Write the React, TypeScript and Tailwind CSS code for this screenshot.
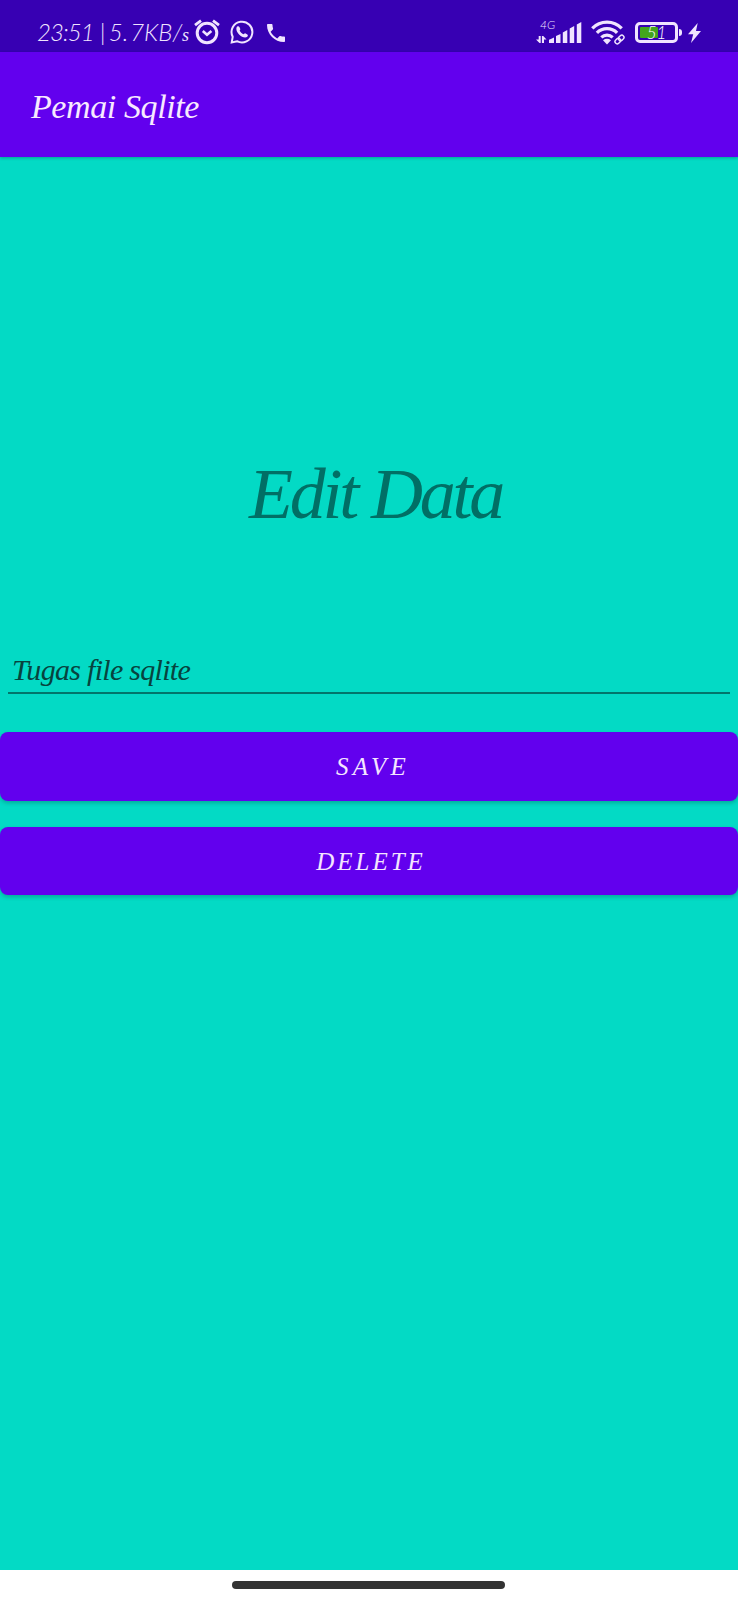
import React from "react";

const digits = "font-['Lato','Liberation_Sans',sans-serif] font-light italic";

function AlarmIcon() {
  return (
    <svg width="28" height="28" viewBox="0 0 28 28" fill="none" stroke="#f0e4ff" strokeWidth="3">
      <circle cx="14" cy="16" r="9.800" />
      <path d="M2 8.200 8 3.600M26 8.200 20 3.600" strokeWidth="2.800" />
      <path d="m9.800 14 4.200 3.700 4.400-3.700" strokeWidth="2.600" />
    </svg>
  );
}

function WhatsappIcon() {
  return (
    <svg width="24" height="24" viewBox="0 0 24 24" fill="none" stroke="#f0e4ff">
      <path d="M2.700 16.800A10.400 10.400 0 1 1 7 21.200L1.700 22.500Z" strokeWidth="2" />
      <path
        d="M7.200 6.600c.6-.6 1.800-.5 2.200.3l.9 2c.2.6-.8 1.500-.6 1.900.8 1.500 2 2.700 3.600 3.400.5.2 1.400-1.200 1.900-.9l2.100 1.100c1 .5.5 2-.4 2.600-2 1.300-5.500-.2-7.800-2.500-2.200-2.200-3.800-5.900-1.900-7.900Z"
        fill="#f0e4ff"
        stroke="none"
      />
    </svg>
  );
}

function PhoneIcon() {
  return (
    <svg width="18" height="18" viewBox="3 3 18 18" fill="#f0e4ff">
      <path d="M6.620 10.790c1.440 2.830 3.760 5.140 6.590 6.590l2.200-2.200c.27-.27.67-.36 1.020-.24 1.120.37 2.330.57 3.570.57.55 0 1 .45 1 1V20c0 .55-.45 1-1 1-9.390 0-17-7.610-17-17 0-.55.45-1 1-1h3.500c.55 0 1 .45 1 1 0 1.250.2 2.450.57 3.570.11.35.03.74-.25 1.020z" />
    </svg>
  );
}

function SignalIcon() {
  return (
    <svg width="46" height="22" viewBox="0 0 46 22" fill="#f0e4ff">
      <path d="M2.700 14h2V21H3.500L0 17.500h2.700ZM5.900 14h1.300l3.300 3.500H8V21H5.900Z" />
      <path d="M13 21v-3.200q2.300-.8 5-2.300V21ZM20 21v-7l4.500-2v9ZM26.800 21V10.500l4.500-2.500v13ZM33.700 21V6.500L38.200 4v17ZM40.800 21V2.500l4.500-2.500v21Z" />
    </svg>
  );
}

function WifiIcon() {
  return (
    <svg width="35" height="26" viewBox="0 0 35 26" fill="none" stroke="#f0e4ff">
      <path d="M1.300 8.300a20.500 20.500 0 0 1 29.400 0" strokeWidth="3.300" />
      <path d="M5.900 12.900a14.300 14.300 0 0 1 20.200 0" strokeWidth="3.300" />
      <path d="M10.300 17.300a8.300 8.300 0 0 1 11.400 0" strokeWidth="3.200" />
      <path d="m12 20.200 4 4.300 4-4.300q-4-2.800-8 0Z" fill="#f0e4ff" stroke="none" />
      <g transform="rotate(-42 28.500 19.500)" stroke="#3700b3" strokeWidth="3.400">
        <rect x="23.200" y="17.300" width="6" height="4.400" rx="2.200" />
        <rect x="27.800" y="17.300" width="6" height="4.400" rx="2.200" />
      </g>
      <g transform="rotate(-42 28.500 19.500)" strokeWidth="1.400">
        <rect x="23.200" y="17.300" width="6" height="4.400" rx="2.200" />
        <rect x="27.800" y="17.300" width="6" height="4.400" rx="2.200" />
      </g>
    </svg>
  );
}

function Battery() {
  return (
    <div className="ml-[9px] mt-[22px] flex items-center">
      <div className="relative h-[21px] w-[43px] rounded-[5px] border-[3px] border-[#f0e4ff] p-[2px]">
        <div className="h-full w-[18px] rounded-[1px] bg-[#43a51c]" />
        <span className={`${digits} absolute inset-0 flex items-center justify-center text-[17px] leading-none text-white`}>51</span>
      </div>
      <div className="ml-[1px] h-[7px] w-[3px] rounded-r bg-[#f0e4ff]" />
      <svg className="ml-[6px]" width="13" height="20" viewBox="0 0 13 20" fill="#f0e4ff">
        <path d="M9.700 0 0 11.200h5.200L3 20 13 8.100H8Z" />
      </svg>
    </div>
  );
}

function StatusBar() {
  return (
    <header className="flex h-[52px] shrink-0 items-start bg-[#3700b3] text-[#f0e4ff]">
      <div className={`${digits} ml-[37px] mt-[18px] flex w-[153px] items-baseline whitespace-nowrap text-[24px] leading-[28px]`}>
        <span className="tracking-[-0.9px]">23:51</span>
        <span className="ml-[6px]">|</span>
        <span className="ml-[3px]">5.</span>
        <span className="ml-[2px]">7KB/</span>
        <span className="font-['Liberation_Serif',serif] text-[18px]">s</span>
      </div>
      <div className="ml-[3px] mt-[17px]"><AlarmIcon /></div>
      <div className="ml-[9px] mt-[20px]"><WhatsappIcon /></div>
      <div className="ml-[13px] mt-[24px]"><PhoneIcon /></div>
      <div className="ml-auto mt-[19px] flex w-[46px] flex-col">
        <span className={`${digits} ml-[4px] h-[3px] text-[12px] leading-[12px]`}>4G</span>
        <SignalIcon />
      </div>
      <div className="ml-[9px] mt-[20px]"><WifiIcon /></div>
      <Battery />
      <div className="w-[37px]" />
    </header>
  );
}

function ActionButton({ children }: { children: React.ReactNode }) {
  return (
    <button className="flex h-[68.5px] w-full items-center justify-center rounded-[8px] bg-[#6200ee] pl-[4px] text-[25px] leading-none text-[#f4e5ff] shadow-[0_2px_4px_rgba(0,0,0,0.22)]">
      {children}
    </button>
  );
}

export default function App() {
  return (
    <div className="flex h-[1600px] w-full flex-col overflow-hidden bg-[#03dac5] font-['Liberation_Serif',serif] italic">
      <StatusBar />
      <div className="flex h-[105px] shrink-0 items-center bg-[#6200ee] pl-[31px] pt-[4px] text-[34px] tracking-[-0.4px] text-[#f8eaff] shadow-[0_1px_3px_rgba(0,0,0,0.25)]">
        <h1>Pemai Sqlite</h1>
      </div>
      <main className="flex flex-1 flex-col">
        <h2 className="mt-[292px] pl-[13px] text-center text-[72px] leading-[90px] tracking-[-3.2px] text-[#016f65]">Edit Data</h2>
        <div className="mx-[8px] mt-[103px] flex h-[52px] items-end border-b-2 border-[#02766b] pb-[5px] pl-[4px] text-[30px] leading-[34px] tracking-[-0.7px] text-[#07433e]">
          Tugas file sqlite
        </div>
        <div className="mt-[38px] flex flex-col gap-[26px]">
          <ActionButton><span className="pl-[4px] tracking-[4.2px]">SAVE</span></ActionButton>
          <ActionButton><span className="pt-[1px] tracking-[3px]">DELETE</span></ActionButton>
        </div>
      </main>
      <footer className="flex h-[30px] shrink-0 justify-center bg-white pr-[1px] pt-[11px]">
        <div className="h-[8px] w-[273px] rounded-full bg-[#333333]" />
      </footer>
    </div>
  );
}
